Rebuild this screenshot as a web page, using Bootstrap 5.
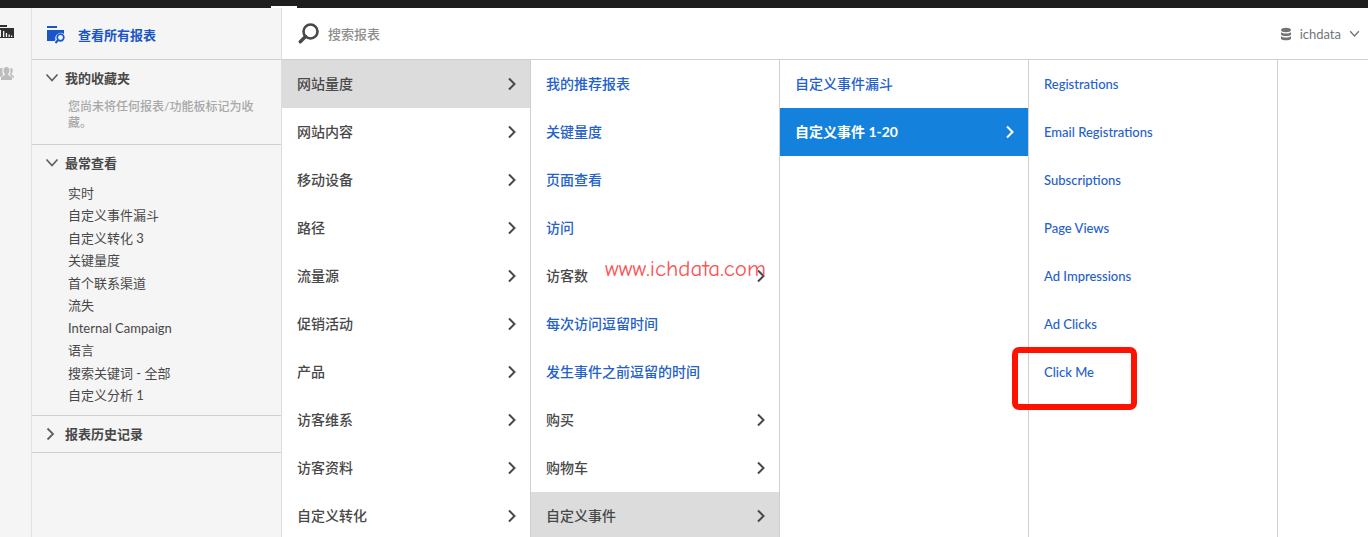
<!DOCTYPE html>
<html lang="zh-CN">
<head>
<meta charset="utf-8">
<meta name="viewport" content="width=device-width, initial-scale=1">
<title>报表</title>
<link rel="stylesheet" href="https://cdn.jsdelivr.net/npm/bootstrap@5.3.0/dist/css/bootstrap.min.css">
<style>
  body { font-family: Lato, "Noto Sans CJK SC", sans-serif; font-size: 14px; line-height: 20px; color: #484848; background: #fff; }
  a, button { color: inherit; text-decoration: none; }
  svg { display: block; flex: none; fill: none; stroke: currentColor; }
  .solid { stroke: none; fill: currentColor; }
  .topbar { height: 8px; background: #1e1e1e; }
  .topbar-tab { left: 271px; bottom: 0; width: 26px; height: 2px; background: #fff; }
  .rail { width: 32px; padding-top: 17px; background: #f5f5f5; border-right: 1px solid #e1e1e1; }
  .rail a { height: 42px; color: #303030; }
  .rail .idle { color: #bdbdbd; }
  .side { width: 250px; background: #f5f5f5; border-right: 1px solid #dedede; font-size: 13px; }
  .side-all { height: 52px; padding: 2px 14px 0; gap: 12px; color: #1a56c6; border-bottom: 1px solid #d0d0d0; }
  .side-sec { border-bottom: 1px solid #d0d0d0; }
  .side-head { height: 36px; padding: 0 13px; gap: 6px; font-weight: 700; color: #484848; }
  .side-head svg { color: #606060; }
  .side-note { padding: 3px 24px 13px 36px; font-size: 12px; line-height: 16px; color: #a8a8a8; font-weight: 500; }
  .side-list { min-height: 234px; padding: 1px 36px 9px; line-height: 22px; }
  .search-bar { height: 52px; padding: 0 8px 0 16px; border-bottom: 1px solid #d0d0d0; }
  .search-bar label { color: #484848; }
  .search-bar input { font-size: 13px; color: #424242; background: none; outline: 0; }
  .search-bar input::placeholder { color: #8e8e8e; opacity: 1; font-weight: 500; }
  .suite { gap: 8px; font-size: 13px; color: #747474; }
  .menu-col { flex: 0 0 249px; border-right: 1px solid #d0d0d0; }
  .menu-item { height: 48px; padding: 0 12px 0 15px; font-weight: 500; color: #484848; }
  .menu-link { color: #2461c9; }
  .menu-open { background: #dcdcdc; }
  .menu-current { background: #1482dc; color: #fff; font-weight: 700; }
  .latin, .menu-latin .menu-item { font-size: 13px; }
  .click-mark { left: -17px; top: -1px; width: 125px; height: 63px; border: 6px solid #ff1200; border-radius: 7px; pointer-events: none; }
  .site-mark { right: 13px; top: 5px; font: 23px/24px "Comic Neue", cursive; color: #fa5555; pointer-events: none; }
</style>
</head>
<body>
<svg width="0" height="0" class="position-absolute" aria-hidden="true">
  <symbol id="right" viewBox="0 0 12 14"><path d="M3 1.500 8.500 7 3 12.500" stroke-width="2"/></symbol>
  <symbol id="down" viewBox="0 0 14 10"><path d="M1.500 1.500 7 7.500 12.500 1.500" stroke-width="1.700"/></symbol>
</svg>
<div class="d-flex flex-column vh-100 overflow-hidden">
  <div class="topbar position-relative flex-shrink-0"><div class="topbar-tab position-absolute"></div></div>
  <div class="d-flex flex-grow-1 overflow-hidden">
    <nav class="rail flex-shrink-0" aria-label="工具">
      <a href="#" class="d-block" aria-label="报表"><svg class="solid" width="14" height="13" viewBox="0 0 14 13"><path d="M0 0h7v2H0zM0 3h14v10H0z"/><path fill="#f5f5f5" d="M0 5h1v7H0zM3 6h1.300v6H3zM5.800 8h1.300v4H5.800zM8.500 9.500h1.300V12H8.500zM11 10.500h1.300V12H11z"/></svg></a>
      <a href="#" class="d-block idle" aria-label="受众"><svg class="solid" width="14" height="13" viewBox="0 0 14 13"><path d="M6.500 0C8.500 0 9.500 1.400 9.500 3.400c0 1.700-.6 2.700-1.300 3.500v1.200c.5.900 3.600 1.200 3.800 2.900V13H1v-2c.2-1.700 3.300-2 3.800-2.900V6.900C4.100 6.100 3.500 5.100 3.500 3.400 3.500 1.400 4.500 0 6.500 0zM10.200 1c2.200-.2 2.900 1.400 2.500 3.400-.2 1-.6 1.700-1 2.200v1c.5.700 2.300 1 2.300 2.400v1h-1.200c-.4-1.600-2.200-2.300-3.200-3 .9-1.600 1.500-3.600.6-7zM2.700 1.200 0 .9v9.600c.6-1 2.200-1.600 3.300-2.300-.9-1.800-1.400-3.800-.6-7z"/></svg></a>
    </nav>
    <aside class="side flex-shrink-0">
      <a href="#" class="side-all d-flex align-items-center fw-bold">
        <svg width="20" height="18" viewBox="0 0 20 18"><path class="solid" d="M1 0h10v2H1zM1 4h17v4a5.500 5.500 0 0 0-8.500 6l-1 1H1z"/><circle cx="14.500" cy="11.500" r="3.300" stroke-width="1.700"/><path d="m12 14-2.500 3" stroke-width="2"/></svg>
        <span>查看所有报表</span>
      </a>
      <section class="side-sec">
        <button type="button" class="side-head d-flex align-items-center w-100 border-0 bg-transparent"><svg width="14" height="10"><use href="#down"/></svg>我的收藏夹</button>
        <p class="side-note m-0">您尚未将任何报表/功能板标记为收藏。</p>
      </section>
      <section class="side-sec">
        <button type="button" class="side-head d-flex align-items-center w-100 border-0 bg-transparent"><svg width="14" height="10"><use href="#down"/></svg>最常查看</button>
        <div class="side-list d-flex flex-column justify-content-between">
          <a href="#">实时</a><a href="#">自定义事件漏斗</a><a href="#">自定义转化 3</a><a href="#">关键量度</a><a href="#">首个联系渠道</a><a href="#">流失</a><a href="#">Internal Campaign</a><a href="#">语言</a><a href="#">搜索关键词 - 全部</a><a href="#">自定义分析 1</a>
        </div>
      </section>
      <section class="side-sec">
        <button type="button" class="side-head d-flex align-items-center w-100 border-0 bg-transparent"><svg width="14" height="14" viewBox="0 0 14 14"><path d="M2.500 1.500 8 7 2.500 12.500" stroke-width="1.800"/></svg>报表历史记录</button>
      </section>
    </aside>
    <main class="d-flex flex-column flex-grow-1 overflow-hidden">
      <div class="search-bar d-flex align-items-center flex-shrink-0">
        <label for="q" aria-label="搜索报表"><svg width="22" height="21" viewBox="0 0 22 21"><circle cx="12.500" cy="8.500" r="7" stroke-width="2.600"/><path d="m7.500 13.500-5.200 5.200" stroke-width="3.400" stroke-linecap="round"/></svg></label>
        <input id="q" type="text" class="flex-grow-1 border-0 px-2" placeholder="搜索报表">
        <button type="button" class="suite d-flex align-items-center border-0 bg-transparent p-0">
          <svg class="solid" width="12" height="14" viewBox="0 0 12 14"><path d="M1 3c0-3 10-3 10 0S1 6 1 3zM1 5.200c2 1.800 8 1.800 10 0v2.300c-1 2-9 2-10 0zM1 9.200c2 1.800 8 1.800 10 0v2.500c-1 2.200-9 2.200-10 0z"/></svg>
          <span>ichdata</span>
          <svg width="11" height="8" viewBox="0 0 14 10"><use href="#down"/></svg>
        </button>
      </div>
      <div class="d-flex flex-grow-1 overflow-hidden">
        <nav class="menu-col">
          <a href="#" class="menu-item menu-open d-flex align-items-center justify-content-between">网站量度<svg width="12" height="14"><use href="#right"/></svg></a>
          <a href="#" class="menu-item d-flex align-items-center justify-content-between">网站内容<svg width="12" height="14"><use href="#right"/></svg></a>
          <a href="#" class="menu-item d-flex align-items-center justify-content-between">移动设备<svg width="12" height="14"><use href="#right"/></svg></a>
          <a href="#" class="menu-item d-flex align-items-center justify-content-between">路径<svg width="12" height="14"><use href="#right"/></svg></a>
          <a href="#" class="menu-item d-flex align-items-center justify-content-between">流量源<svg width="12" height="14"><use href="#right"/></svg></a>
          <a href="#" class="menu-item d-flex align-items-center justify-content-between">促销活动<svg width="12" height="14"><use href="#right"/></svg></a>
          <a href="#" class="menu-item d-flex align-items-center justify-content-between">产品<svg width="12" height="14"><use href="#right"/></svg></a>
          <a href="#" class="menu-item d-flex align-items-center justify-content-between">访客维系<svg width="12" height="14"><use href="#right"/></svg></a>
          <a href="#" class="menu-item d-flex align-items-center justify-content-between">访客资料<svg width="12" height="14"><use href="#right"/></svg></a>
          <a href="#" class="menu-item d-flex align-items-center justify-content-between">自定义转化<svg width="12" height="14"><use href="#right"/></svg></a>
        </nav>
        <nav class="menu-col">
          <a href="#" class="menu-item menu-link d-flex align-items-center">我的推荐报表</a>
          <a href="#" class="menu-item menu-link d-flex align-items-center">关键量度</a>
          <a href="#" class="menu-item menu-link d-flex align-items-center">页面查看</a>
          <a href="#" class="menu-item menu-link d-flex align-items-center">访问</a>
          <a href="#" class="menu-item d-flex align-items-center justify-content-between position-relative">访客数<svg width="12" height="14"><use href="#right"/></svg><span class="site-mark position-absolute">www.ichdata.com</span></a>
          <a href="#" class="menu-item menu-link d-flex align-items-center">每次访问逗留时间</a>
          <a href="#" class="menu-item menu-link d-flex align-items-center">发生事件之前逗留的时间</a>
          <a href="#" class="menu-item d-flex align-items-center justify-content-between">购买<svg width="12" height="14"><use href="#right"/></svg></a>
          <a href="#" class="menu-item d-flex align-items-center justify-content-between">购物车<svg width="12" height="14"><use href="#right"/></svg></a>
          <a href="#" class="menu-item menu-open d-flex align-items-center justify-content-between">自定义事件<svg width="12" height="14"><use href="#right"/></svg></a>
        </nav>
        <nav class="menu-col">
          <a href="#" class="menu-item menu-link d-flex align-items-center">自定义事件漏斗</a>
          <a href="#" class="menu-item menu-current d-flex align-items-center justify-content-between">自定义事件 1-20<svg width="12" height="14"><use href="#right"/></svg></a>
        </nav>
        <nav class="menu-col menu-latin">
          <a href="#" class="menu-item menu-link d-flex align-items-center">Registrations</a>
          <a href="#" class="menu-item menu-link d-flex align-items-center">Email Registrations</a>
          <a href="#" class="menu-item menu-link d-flex align-items-center">Subscriptions</a>
          <a href="#" class="menu-item menu-link d-flex align-items-center">Page Views</a>
          <a href="#" class="menu-item menu-link d-flex align-items-center">Ad Impressions</a>
          <a href="#" class="menu-item menu-link d-flex align-items-center">Ad Clicks</a>
          <a href="#" class="menu-item menu-link d-flex align-items-center position-relative">Click Me<span class="click-mark position-absolute"></span></a>
        </nav>
      </div>
    </main>
  </div>
</div>
<script src="https://cdn.jsdelivr.net/npm/bootstrap@5.3.0/dist/js/bootstrap.bundle.min.js"></script>
</body>
</html>
